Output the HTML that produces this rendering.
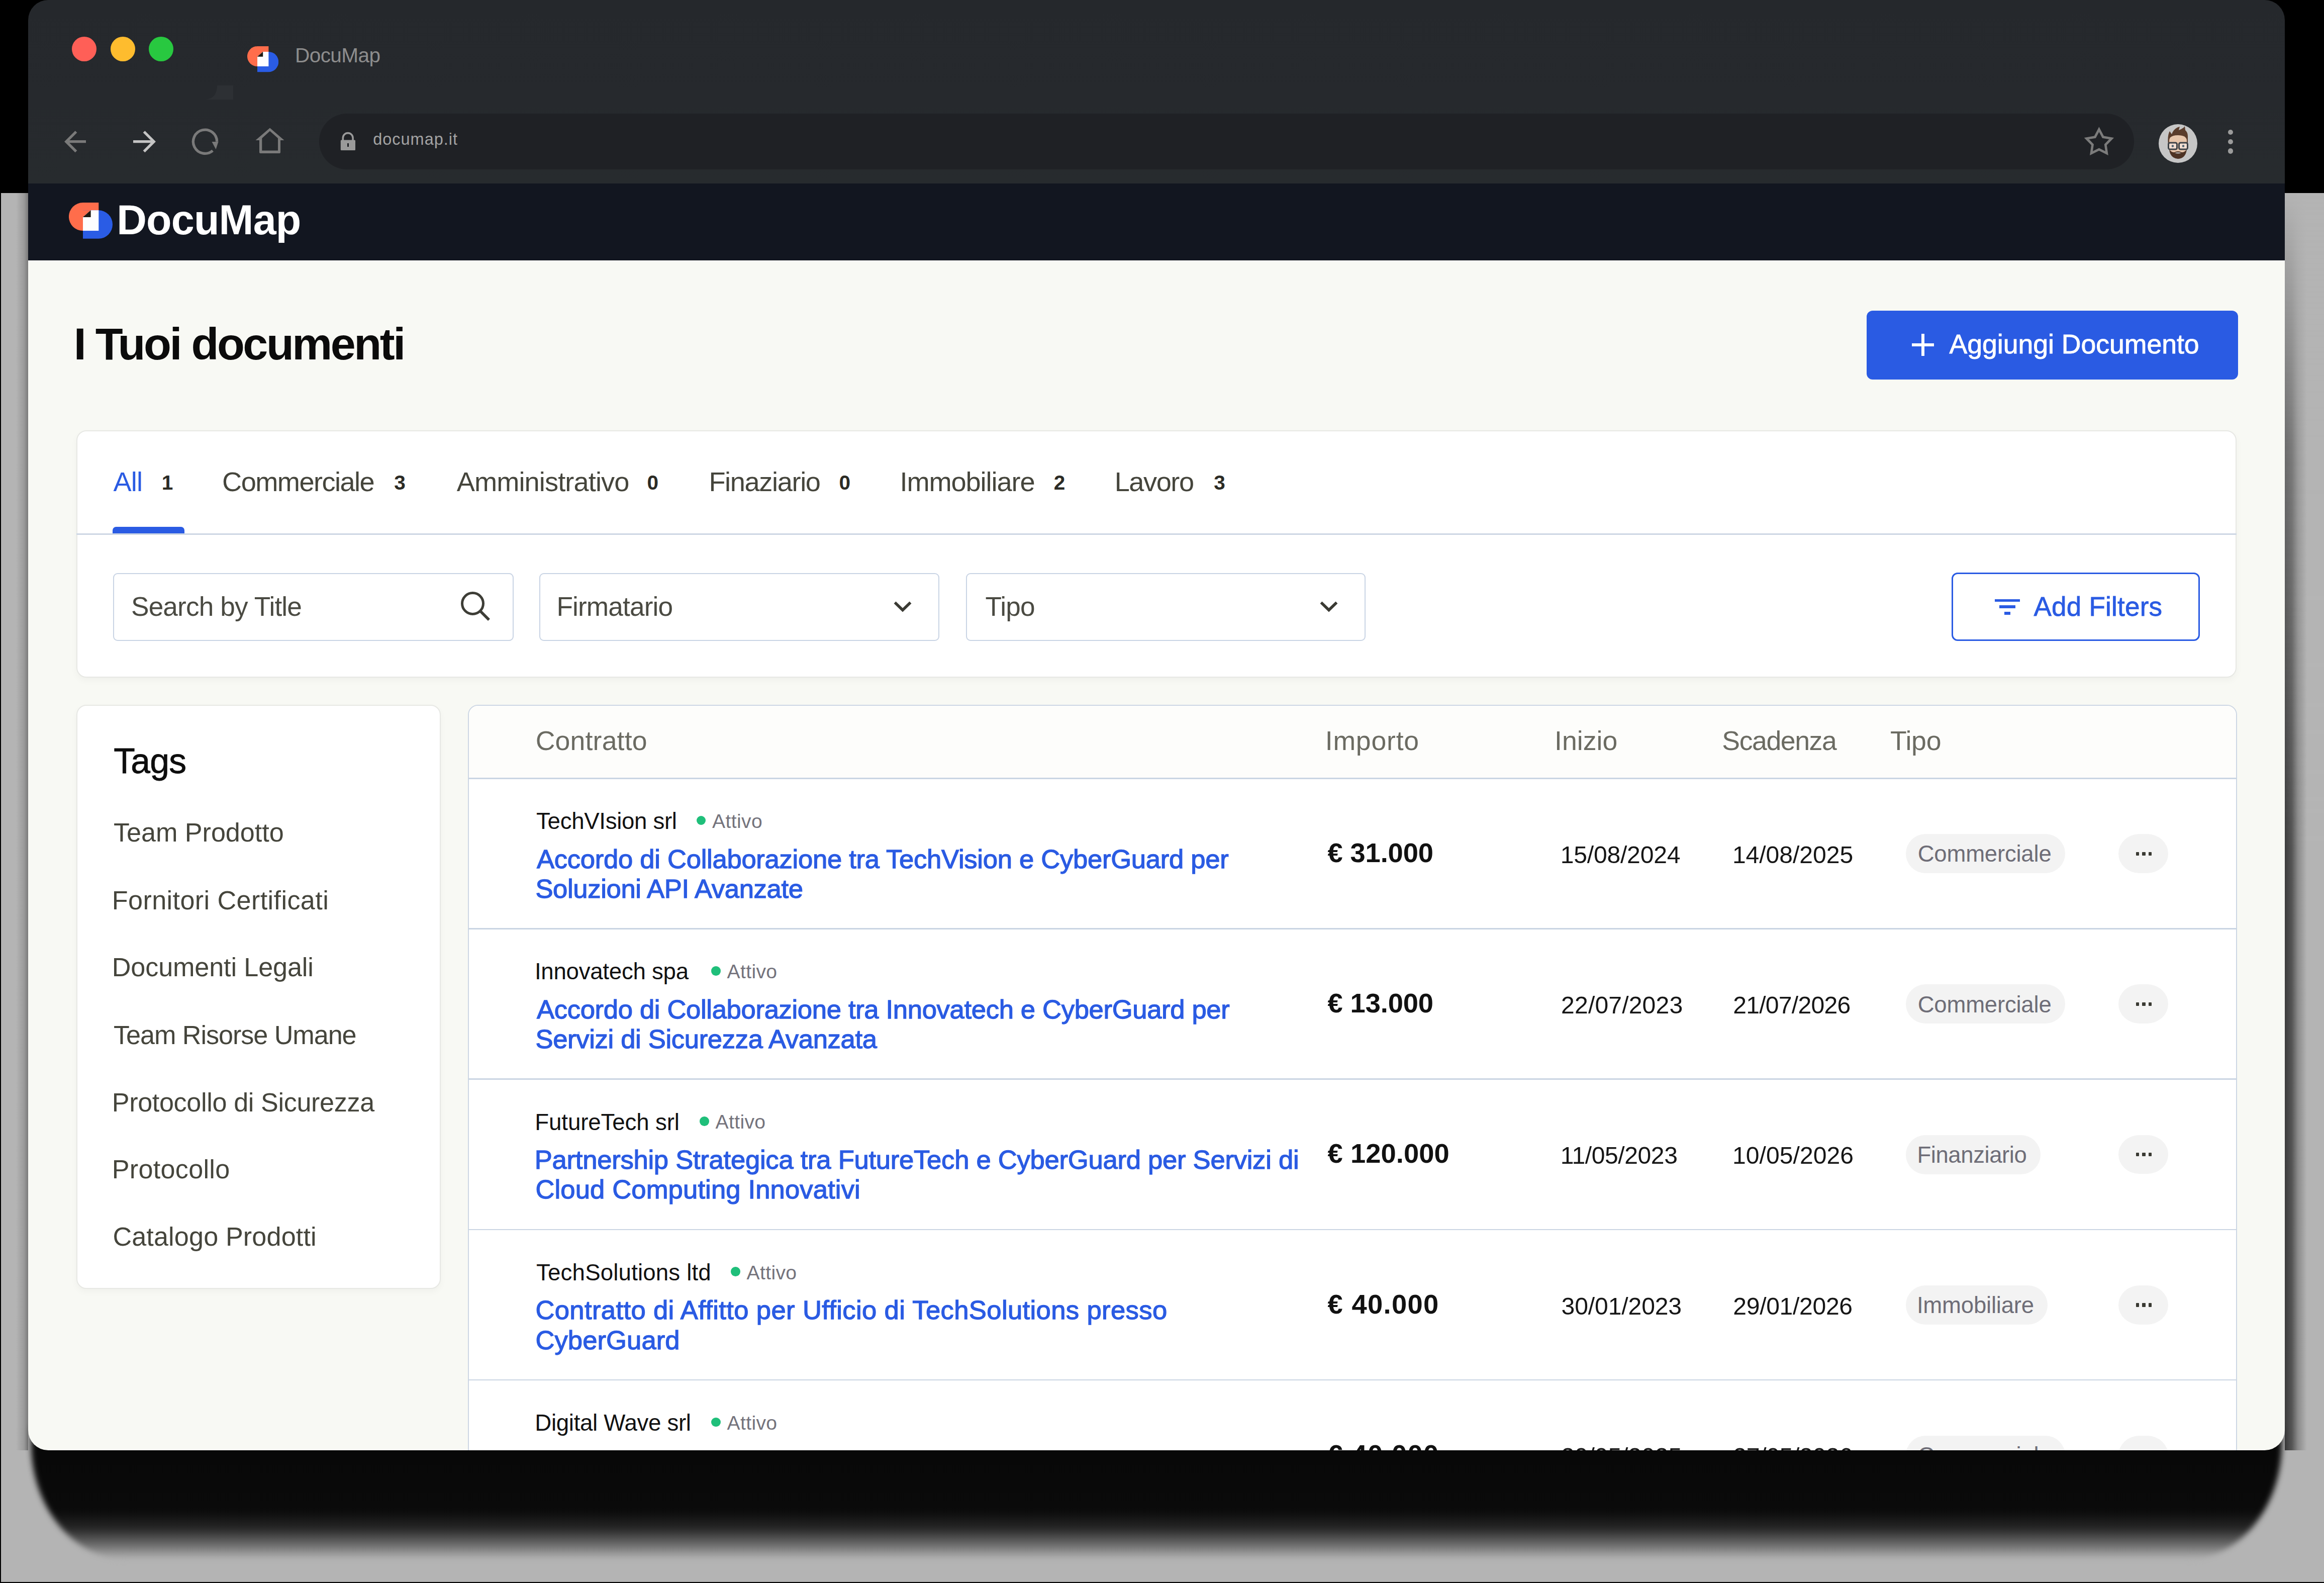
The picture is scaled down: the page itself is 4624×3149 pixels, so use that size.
<!DOCTYPE html>
<html><head><meta charset="utf-8"><style>
html,body{margin:0;padding:0;}
body{width:4624px;height:3149px;position:relative;overflow:hidden;background:#b4b4b4;font-family:"Liberation Sans",sans-serif;}
div{white-space:nowrap;}
</style></head><body>
<div style="position:absolute;left:0px;top:0px;width:4624px;height:384px;background:#000"></div>
<div style="position:absolute;left:0px;top:384px;width:56px;height:2501px;background:linear-gradient(to left,#7a7a7a 0,#9a9a9a 8px,#b4b4b4 24px)"></div>
<div style="position:absolute;left:4546px;top:384px;width:78px;height:2501px;background:#b4b4b4"></div>
<div style="position:absolute;left:4546px;top:384px;width:78px;height:2501px;background:linear-gradient(to right,#3c3c3c 0,#555 14px,#8a8a8a 26px,#b4b4b4 44px);-webkit-mask-image:linear-gradient(to bottom,transparent 0,rgba(0,0,0,.6) 500px,#000 1300px)"></div>
<div style="position:absolute;left:62px;top:2840px;width:4478px;height:262px;background:linear-gradient(to bottom,#070707 0,#0a0a0a 165px,#262626 200px,#6a6a6a 232px,#b4b4b4 262px);border-radius:0 0 190px 190px/0 0 230px 230px;filter:blur(6px)"></div>
<div style="position:absolute;left:0px;top:3147px;width:4624px;height:2px;background:#000"></div>
<div style="position:absolute;left:0px;top:384px;width:2px;height:2765px;background:#000"></div>
<div style="position:absolute;left:0;top:0;width:4624px;height:3149px;clip-path:inset(0px 78px 264px 56px round 40px);">
<div style="position:absolute;left:56px;top:0px;width:4490px;height:365px;background:linear-gradient(to bottom,#25282c 0,#26292d 200px,#272b2e 365px)"></div>
<div style="position:absolute;left:142.8px;top:73.1px;width:49px;height:49px;background:#ff5f57;border-radius:50%"></div>
<div style="position:absolute;left:219.7px;top:73.1px;width:49px;height:49px;background:#febc2e;border-radius:50%"></div>
<div style="position:absolute;left:296.1px;top:73.1px;width:49px;height:49px;background:#28c840;border-radius:50%"></div>
<svg style="position:absolute;left:0;top:0" width="600" height="220"><path d="M464 170 L432 170 Q432 198 405 198 L464 198 Z" fill="#2d3034"/></svg>
<svg style="position:absolute;left:491.6px;top:92px" width="62.2" height="51.5" viewBox="0 0 87 72"><path d="M59.3 0 H28 A28 28 0 0 0 28 56.1 H59.3 Z" fill="#ff6d4b"/><path d="M28 15.3 H59 A28 28.25 0 0 1 59 71.8 H28 Z" fill="#2a5ce5"/><path d="M43.6 15.3 H59.3 V56.1 H28 V29 Z" fill="#fdfdff"/><path d="M28 15.3 H43.6 L28 29 Z" fill="#ff6d4b"/><path d="M43.6 15.3 V29 H28 Z" fill="#1e1a12"/></svg>
<div style="position:absolute;left:587.0px;top:89.5px;font-size:40.58px;line-height:40.58px;font-weight:400;letter-spacing:-0.60px;color:#8d8d8d;">DocuMap</div>
<svg style="position:absolute;left:0;top:0" width="700" height="365"><g fill="none" stroke="#7a7a7a" stroke-width="5.3" stroke-linecap="butt"><path d="M171 281.7 H133 M151.5 262 L131.8 281.7 L151.5 301.4"/><path d="M265 281.7 H303 M286.5 262 L306.2 281.7 L286.5 301.4" stroke="#c4c4c4"/><path d="M423.2 299.8 A23.6 23.6 0 1 1 431.6 281.7"/></g><path d="M421.5 282 L434.5 282 L429.5 297 Z" fill="#7a7a7a"/><path fill-rule="evenodd" fill="#7a7a7a" d="M537 254.5 L565.5 279 H558 V303 Q558 305 556 305 H518 Q516 305 516 303 V279 H508.5 Z M537 260.8 L553 275 V299.6 H521.3 V275 Z"/></svg>
<div style="position:absolute;left:635px;top:226px;width:3611px;height:111px;background:#1f2125;border-radius:56px"></div>
<svg style="position:absolute;left:670px;top:258px" width="45" height="50"><path d="M12.3 21 V16.5 A9.9 9.9 0 0 1 32.1 16.5 V21" fill="none" stroke="#9a9a9a" stroke-width="3.6"/><rect x="7.8" y="20.6" width="29.2" height="20.4" rx="1.5" fill="#9a9a9a"/><rect x="21" y="27" width="3" height="7" fill="#1f2125"/></svg>
<div style="position:absolute;left:742.2px;top:260.7px;font-size:32.46px;line-height:32.46px;font-weight:400;letter-spacing:1.01px;color:#a3a3a3;">documap.it</div>
<svg style="position:absolute;left:0;top:0;width:4624px;height:365px" width="4624" height="365"><path d="M4176.4 257.4 L4184.4 272.6 L4201.3 275.5 L4189.3 287.8 L4191.8 304.8 L4176.4 297.2 L4161.0 304.8 L4163.5 287.8 L4151.5 275.5 L4168.4 272.6 Z" fill="none" stroke="#7b7b7b" stroke-width="4.7" stroke-linejoin="miter"/></svg>
<svg style="position:absolute;left:4294.8px;top:246.8px" width="77" height="77" viewBox="0 0 77 77"><circle cx="38.5" cy="38.5" r="38.5" fill="#c6c6c6"/><path d="M19 42 Q17 22 22 14 L26 20 Q30 8 42 5 L40 12 Q50 8 52 4 L53 12 Q58 16 58 24 L58 42 Z" fill="#5b3d2c"/><path d="M21 32 Q22 22 38.5 22 Q55 22 56 32 L56 48 Q55 62 38.5 63 Q22 62 21 48 Z" fill="#e8c6ab"/><path d="M21 50 Q23 68 38.5 69 Q54 68 56 50 Q52 56 46 56 Q38.5 52 31 56 Q25 56 21 50 Z" fill="#4e3324"/><path d="M32 57 Q38.5 55 45 57 Q38.5 60 32 57 Z" fill="#b8b8b8"/><rect x="19.5" y="37" width="17" height="13" rx="3" fill="#f1ddd0" stroke="#3d4247" stroke-width="3"/><rect x="40.5" y="37" width="17" height="13" rx="3" fill="#f1ddd0" stroke="#3d4247" stroke-width="3"/><circle cx="28" cy="43.5" r="2.2" fill="#4b6070"/><circle cx="49" cy="43.5" r="2.2" fill="#4b6070"/></svg>
<div style="position:absolute;left:4432.5px;top:257.7px;width:10.6px;height:10.6px;background:#9b9b9b;border-radius:50%"></div>
<div style="position:absolute;left:4432.5px;top:276.7px;width:10.6px;height:10.6px;background:#9b9b9b;border-radius:50%"></div>
<div style="position:absolute;left:4432.5px;top:295.2px;width:10.6px;height:10.6px;background:#9b9b9b;border-radius:50%"></div>
<div style="position:absolute;left:56px;top:365px;width:4490px;height:153px;background:#121620"></div>
<svg style="position:absolute;left:137px;top:402.7px" width="87.0" height="72.0" viewBox="0 0 87 72"><path d="M59.3 0 H28 A28 28 0 0 0 28 56.1 H59.3 Z" fill="#ff6d4b"/><path d="M28 15.3 H59 A28 28.25 0 0 1 59 71.8 H28 Z" fill="#2a5ce5"/><path d="M43.6 15.3 H59.3 V56.1 H28 V29 Z" fill="#fdfdff"/><path d="M28 15.3 H43.6 L28 29 Z" fill="#ff6d4b"/><path d="M43.6 15.3 V29 H28 Z" fill="#1e1a12"/></svg>
<div style="position:absolute;left:232.2px;top:396.8px;font-size:82.61px;line-height:82.61px;font-weight:700;letter-spacing:-0.78px;color:#ffffff;">DocuMap</div>
<div style="position:absolute;left:56px;top:518px;width:4490px;height:2367px;background:#f8f9f4"></div>
<div style="position:absolute;left:146.7px;top:639.6px;font-size:89.86px;line-height:89.86px;font-weight:700;letter-spacing:-3.44px;color:#0b0b0b;">I Tuoi documenti</div>
<div style="position:absolute;left:3714px;top:618px;width:738.5px;height:137px;background:#2a5be3;border-radius:12px"></div>
<div style="position:absolute;left:3804px;top:683px;width:43.5px;height:6px;background:#fff"></div>
<div style="position:absolute;left:3822.8px;top:664.4px;width:6px;height:43.6px;background:#fff"></div>
<div style="position:absolute;left:3878.5px;top:658.4px;font-size:53.62px;line-height:53.62px;font-weight:400;letter-spacing:-0.03px;color:#ffffff;-webkit-text-stroke:0.9px #fff;">Aggiungi Documento</div>
<div style="position:absolute;left:152px;top:856px;width:4298px;height:492px;background:#fff;border:2px solid #e7e8e4;border-radius:20px;box-sizing:border-box;box-shadow:0 6px 14px rgba(0,0,0,0.035)"></div>
<div style="position:absolute;left:225.5px;top:930.5px;font-size:54.20px;line-height:54.20px;font-weight:400;letter-spacing:-0.86px;color:#2a5be3;">All</div>
<div style="position:absolute;left:442.1px;top:930.5px;font-size:54.20px;line-height:54.20px;font-weight:400;letter-spacing:-1.56px;color:#45453c;">Commerciale</div>
<div style="position:absolute;left:908.7px;top:930.5px;font-size:54.20px;line-height:54.20px;font-weight:400;letter-spacing:-0.89px;color:#45453c;">Amministrativo</div>
<div style="position:absolute;left:1410.4px;top:930.5px;font-size:54.20px;line-height:54.20px;font-weight:400;letter-spacing:-1.37px;color:#45453c;">Finaziario</div>
<div style="position:absolute;left:1790.5px;top:930.5px;font-size:54.20px;line-height:54.20px;font-weight:400;letter-spacing:-1.10px;color:#45453c;">Immobiliare</div>
<div style="position:absolute;left:2217.7px;top:930.5px;font-size:54.20px;line-height:54.20px;font-weight:400;letter-spacing:-1.47px;color:#45453c;">Lavoro</div>
<div style="position:absolute;left:321.8px;top:940.2px;font-size:40.58px;line-height:40.58px;font-weight:700;letter-spacing:0.00px;color:#2b2b25;">1</div>
<div style="position:absolute;left:784.2px;top:940.2px;font-size:40.58px;line-height:40.58px;font-weight:700;letter-spacing:0.00px;color:#2b2b25;">3</div>
<div style="position:absolute;left:1287.4px;top:940.2px;font-size:40.58px;line-height:40.58px;font-weight:700;letter-spacing:0.00px;color:#2b2b25;">0</div>
<div style="position:absolute;left:1669.4px;top:940.2px;font-size:40.58px;line-height:40.58px;font-weight:700;letter-spacing:0.00px;color:#2b2b25;">0</div>
<div style="position:absolute;left:2096.8px;top:940.2px;font-size:40.58px;line-height:40.58px;font-weight:700;letter-spacing:0.00px;color:#2b2b25;">2</div>
<div style="position:absolute;left:2415.2px;top:940.2px;font-size:40.58px;line-height:40.58px;font-weight:700;letter-spacing:0.00px;color:#2b2b25;">3</div>
<div style="position:absolute;left:224px;top:1048px;width:143px;height:13px;background:#2a5be3;border-radius:7px 7px 0 0"></div>
<div style="position:absolute;left:152px;top:1061px;width:4298px;height:2.5px;background:#cdd7e4"></div>
<div style="position:absolute;left:225px;top:1140px;width:797px;height:135px;background:#fff;border:2px solid #c9d4e4;border-radius:9px;box-sizing:border-box"></div>
<div style="position:absolute;left:1073px;top:1140px;width:796px;height:135px;background:#fff;border:2px solid #c9d4e4;border-radius:9px;box-sizing:border-box"></div>
<div style="position:absolute;left:1922px;top:1140px;width:795px;height:135px;background:#fff;border:2px solid #c9d4e4;border-radius:9px;box-sizing:border-box"></div>
<div style="position:absolute;left:261.0px;top:1179.5px;font-size:53.19px;line-height:53.19px;font-weight:400;letter-spacing:-0.85px;color:#4a4a42;">Search by Title</div>
<div style="position:absolute;left:1107.4px;top:1179.5px;font-size:53.19px;line-height:53.19px;font-weight:400;letter-spacing:-0.85px;color:#4a4a42;">Firmatario</div>
<div style="position:absolute;left:1960.4px;top:1179.5px;font-size:53.19px;line-height:53.19px;font-weight:400;letter-spacing:-0.73px;color:#4a4a42;">Tipo</div>
<svg style="position:absolute;left:900px;top:1160px" width="90" height="90"><circle cx="40.5" cy="40.5" r="21" fill="none" stroke="#3d3d36" stroke-width="5"/><path d="M56 56 L73 73" stroke="#3d3d36" stroke-width="5.5" stroke-linecap="butt"/></svg>
<svg style="position:absolute;left:1770.5px;top:1180px" width="50" height="50"><path d="M9.5 18.5 L25 33.5 L40.5 18.5" fill="none" stroke="#3a3a33" stroke-width="5.6"/></svg>
<svg style="position:absolute;left:2618.5px;top:1180px" width="50" height="50"><path d="M9.5 18.5 L25 33.5 L40.5 18.5" fill="none" stroke="#3a3a33" stroke-width="5.6"/></svg>
<div style="position:absolute;left:3882.6px;top:1139px;width:494.4px;height:136px;border:3px solid #2a5be3;border-radius:12px;box-sizing:border-box"></div>
<div style="position:absolute;left:3968.7px;top:1191.6px;width:50.2px;height:5.6px;background:#2a5be3"></div>
<div style="position:absolute;left:3978px;top:1204.3px;width:31.6px;height:5.7px;background:#2a5be3"></div>
<div style="position:absolute;left:3988px;top:1217px;width:12.3px;height:5.9px;background:#2a5be3"></div>
<div style="position:absolute;left:4046.5px;top:1179.5px;font-size:53.04px;line-height:53.04px;font-weight:400;letter-spacing:0.21px;color:#2a5be3;-webkit-text-stroke:0.8px #2a5be3;">Add Filters</div>
<div style="position:absolute;left:152px;top:1402px;width:724.6px;height:1162px;background:#fff;border:2px solid #e7e8e4;border-radius:20px;box-sizing:border-box;box-shadow:0 6px 14px rgba(0,0,0,0.035)"></div>
<div style="position:absolute;left:226.3px;top:1479.5px;font-size:69.57px;line-height:69.57px;font-weight:400;letter-spacing:-0.77px;color:#0d0d0d;-webkit-text-stroke:0.8px #0d0d0d;">Tags</div>
<div style="position:absolute;left:226.0px;top:1630.2px;font-size:52.17px;line-height:52.17px;font-weight:400;letter-spacing:-0.04px;color:#45453c;">Team Prodotto</div>
<div style="position:absolute;left:222.8px;top:1764.5px;font-size:52.17px;line-height:52.17px;font-weight:400;letter-spacing:0.39px;color:#45453c;">Fornitori Certificati</div>
<div style="position:absolute;left:222.8px;top:1898.4px;font-size:52.17px;line-height:52.17px;font-weight:400;letter-spacing:-0.13px;color:#45453c;">Documenti Legali</div>
<div style="position:absolute;left:226.0px;top:2032.7px;font-size:52.17px;line-height:52.17px;font-weight:400;letter-spacing:-1.05px;color:#45453c;">Team Risorse Umane</div>
<div style="position:absolute;left:222.8px;top:2167.2px;font-size:52.17px;line-height:52.17px;font-weight:400;letter-spacing:-0.37px;color:#45453c;">Protocollo di Sicurezza</div>
<div style="position:absolute;left:222.8px;top:2300.3px;font-size:52.17px;line-height:52.17px;font-weight:400;letter-spacing:0.27px;color:#45453c;">Protocollo</div>
<div style="position:absolute;left:224.4px;top:2434.2px;font-size:52.17px;line-height:52.17px;font-weight:400;letter-spacing:0.14px;color:#45453c;">Catalogo Prodotti</div>
<div style="position:absolute;left:931px;top:1402px;width:3519.7px;height:1700px;background:#fff;border:2px solid #cdd7e4;border-radius:20px;box-sizing:border-box"></div>
<div style="position:absolute;left:933px;top:1404px;width:3515.7px;height:143px;background:#fdfdfb;border-radius:18px 18px 0 0"></div>
<div style="position:absolute;left:931px;top:1547px;width:3519.7px;height:2.5px;background:#cad5e3"></div>
<div style="position:absolute;left:1065.7px;top:1447.4px;font-size:53.62px;line-height:53.62px;font-weight:400;letter-spacing:0.17px;color:#6b6b62;">Contratto</div>
<div style="position:absolute;left:2636.8px;top:1447.4px;font-size:53.62px;line-height:53.62px;font-weight:400;letter-spacing:0.76px;color:#6b6b62;">Importo</div>
<div style="position:absolute;left:3093.0px;top:1447.4px;font-size:53.62px;line-height:53.62px;font-weight:400;letter-spacing:0.05px;color:#6b6b62;">Inizio</div>
<div style="position:absolute;left:3426.3px;top:1447.4px;font-size:53.62px;line-height:53.62px;font-weight:400;letter-spacing:-1.42px;color:#6b6b62;">Scadenza</div>
<div style="position:absolute;left:3760.9px;top:1447.4px;font-size:53.62px;line-height:53.62px;font-weight:400;letter-spacing:-0.23px;color:#6b6b62;">Tipo</div>
<div style="position:absolute;left:931px;top:1846.0px;width:3519.7px;height:2.5px;background:#cad5e3"></div>
<div style="position:absolute;left:1067.1px;top:1611.2px;font-size:45.65px;line-height:45.65px;font-weight:400;letter-spacing:-0.33px;color:#111111;">TechVIsion srl</div>
<div style="position:absolute;left:1385.6px;top:1622.7px;width:18.6px;height:18.6px;background:#1fbf7a;border-radius:50%"></div>
<div style="position:absolute;left:1417.1px;top:1613.9px;font-size:39.13px;line-height:39.13px;font-weight:400;letter-spacing:0.35px;color:#74737c;">Attivo</div>
<div style="position:absolute;left:1068.0px;top:1682.6px;font-size:52.61px;line-height:52.61px;font-weight:400;letter-spacing:-0.29px;color:#2a5be3;-webkit-text-stroke:1.3px #2a5be3;">Accordo di Collaborazione tra TechVision e CyberGuard per</div>
<div style="position:absolute;left:1065.4px;top:1741.9px;font-size:52.61px;line-height:52.61px;font-weight:400;letter-spacing:-0.36px;color:#2a5be3;-webkit-text-stroke:1.3px #2a5be3;">Soluzioni API Avanzate</div>
<div style="position:absolute;left:2641.5px;top:1669.8px;font-size:54.35px;line-height:54.35px;font-weight:700;letter-spacing:-0.16px;color:#111111;">€ 31.000</div>
<div style="position:absolute;left:3104.7px;top:1675.8px;font-size:48.12px;line-height:48.12px;font-weight:400;letter-spacing:-0.22px;color:#161616;">15/08/2024</div>
<div style="position:absolute;left:3446.9px;top:1675.8px;font-size:48.12px;line-height:48.12px;font-weight:400;letter-spacing:-0.06px;color:#161616;">14/08/2025</div>
<div style="position:absolute;left:3791.6px;top:1659.0px;width:317.7999999999997px;height:78px;background:#f3f3f3;border-radius:39px"></div>
<div style="position:absolute;left:3815.7px;top:1676.3px;font-size:45.51px;line-height:45.51px;font-weight:400;letter-spacing:-0.20px;color:#6e6d77;">Commerciale</div>
<div style="position:absolute;left:4215.2px;top:1659.2px;width:99.1px;height:77.7px;background:#f3f3f3;border-radius:42px/39px"></div>
<div style="position:absolute;left:4249.8px;top:1694.6px;width:6.3px;height:7.4px;background:#3a3a33;border-radius:1px"></div>
<div style="position:absolute;left:4262.35px;top:1694.6px;width:6.3px;height:7.4px;background:#3a3a33;border-radius:1px"></div>
<div style="position:absolute;left:4274.900000000001px;top:1694.6px;width:6.3px;height:7.4px;background:#3a3a33;border-radius:1px"></div>
<div style="position:absolute;left:931px;top:2145.25px;width:3519.7px;height:2.5px;background:#cad5e3"></div>
<div style="position:absolute;left:1063.9px;top:1910.4px;font-size:45.65px;line-height:45.65px;font-weight:400;letter-spacing:-0.26px;color:#111111;">Innovatech spa</div>
<div style="position:absolute;left:1415px;top:1921.95px;width:18.6px;height:18.6px;background:#1fbf7a;border-radius:50%"></div>
<div style="position:absolute;left:1446.5px;top:1913.2px;font-size:39.13px;line-height:39.13px;font-weight:400;letter-spacing:0.35px;color:#74737c;">Attivo</div>
<div style="position:absolute;left:1068.0px;top:1981.8px;font-size:52.61px;line-height:52.61px;font-weight:400;letter-spacing:-0.34px;color:#2a5be3;-webkit-text-stroke:1.3px #2a5be3;">Accordo di Collaborazione tra Innovatech e CyberGuard per</div>
<div style="position:absolute;left:1065.4px;top:2041.1px;font-size:52.61px;line-height:52.61px;font-weight:400;letter-spacing:-0.34px;color:#2a5be3;-webkit-text-stroke:1.3px #2a5be3;">Servizi di Sicurezza Avanzata</div>
<div style="position:absolute;left:2641.5px;top:1969.1px;font-size:54.35px;line-height:54.35px;font-weight:700;letter-spacing:-0.14px;color:#111111;">€ 13.000</div>
<div style="position:absolute;left:3106.1px;top:1975.1px;font-size:48.12px;line-height:48.12px;font-weight:400;letter-spacing:0.14px;color:#161616;">22/07/2023</div>
<div style="position:absolute;left:3448.3px;top:1975.1px;font-size:48.12px;line-height:48.12px;font-weight:400;letter-spacing:-0.77px;color:#161616;">21/07/2026</div>
<div style="position:absolute;left:3791.6px;top:1958.25px;width:317.7999999999997px;height:78px;background:#f3f3f3;border-radius:39px"></div>
<div style="position:absolute;left:3815.7px;top:1975.6px;font-size:45.51px;line-height:45.51px;font-weight:400;letter-spacing:-0.20px;color:#6e6d77;">Commerciale</div>
<div style="position:absolute;left:4215.2px;top:1958.45px;width:99.1px;height:77.7px;background:#f3f3f3;border-radius:42px/39px"></div>
<div style="position:absolute;left:4249.8px;top:1993.85px;width:6.3px;height:7.4px;background:#3a3a33;border-radius:1px"></div>
<div style="position:absolute;left:4262.35px;top:1993.85px;width:6.3px;height:7.4px;background:#3a3a33;border-radius:1px"></div>
<div style="position:absolute;left:4274.900000000001px;top:1993.85px;width:6.3px;height:7.4px;background:#3a3a33;border-radius:1px"></div>
<div style="position:absolute;left:931px;top:2444.5px;width:3519.7px;height:2.5px;background:#cad5e3"></div>
<div style="position:absolute;left:1064.3px;top:2209.7px;font-size:45.65px;line-height:45.65px;font-weight:400;letter-spacing:-0.12px;color:#111111;">FutureTech srl</div>
<div style="position:absolute;left:1392px;top:2221.2px;width:18.6px;height:18.6px;background:#1fbf7a;border-radius:50%"></div>
<div style="position:absolute;left:1423.5px;top:2212.4px;font-size:39.13px;line-height:39.13px;font-weight:400;letter-spacing:0.35px;color:#74737c;">Attivo</div>
<div style="position:absolute;left:1063.8px;top:2281.1px;font-size:52.61px;line-height:52.61px;font-weight:400;letter-spacing:-0.27px;color:#2a5be3;-webkit-text-stroke:1.3px #2a5be3;">Partnership Strategica tra FutureTech e CyberGuard per Servizi di</div>
<div style="position:absolute;left:1065.4px;top:2340.4px;font-size:52.61px;line-height:52.61px;font-weight:400;letter-spacing:0.12px;color:#2a5be3;-webkit-text-stroke:1.3px #2a5be3;">Cloud Computing Innovativi</div>
<div style="position:absolute;left:2641.5px;top:2268.3px;font-size:54.35px;line-height:54.35px;font-weight:700;letter-spacing:0.07px;color:#111111;">€ 120.000</div>
<div style="position:absolute;left:3104.7px;top:2274.3px;font-size:48.12px;line-height:48.12px;font-weight:400;letter-spacing:-0.44px;color:#161616;">11/05/2023</div>
<div style="position:absolute;left:3446.9px;top:2274.3px;font-size:48.12px;line-height:48.12px;font-weight:400;letter-spacing:0.05px;color:#161616;">10/05/2026</div>
<div style="position:absolute;left:3791.6px;top:2257.5px;width:268.9000000000001px;height:78px;background:#f3f3f3;border-radius:39px"></div>
<div style="position:absolute;left:3814.4px;top:2274.8px;font-size:45.51px;line-height:45.51px;font-weight:400;letter-spacing:-0.41px;color:#6e6d77;">Finanziario</div>
<div style="position:absolute;left:4215.2px;top:2257.7px;width:99.1px;height:77.7px;background:#f3f3f3;border-radius:42px/39px"></div>
<div style="position:absolute;left:4249.8px;top:2293.1px;width:6.3px;height:7.4px;background:#3a3a33;border-radius:1px"></div>
<div style="position:absolute;left:4262.35px;top:2293.1px;width:6.3px;height:7.4px;background:#3a3a33;border-radius:1px"></div>
<div style="position:absolute;left:4274.900000000001px;top:2293.1px;width:6.3px;height:7.4px;background:#3a3a33;border-radius:1px"></div>
<div style="position:absolute;left:931px;top:2743.75px;width:3519.7px;height:2.5px;background:#cad5e3"></div>
<div style="position:absolute;left:1067.1px;top:2508.9px;font-size:45.65px;line-height:45.65px;font-weight:400;letter-spacing:0.16px;color:#111111;">TechSolutions ltd</div>
<div style="position:absolute;left:1454px;top:2520.45px;width:18.6px;height:18.6px;background:#1fbf7a;border-radius:50%"></div>
<div style="position:absolute;left:1485.5px;top:2511.7px;font-size:39.13px;line-height:39.13px;font-weight:400;letter-spacing:0.35px;color:#74737c;">Attivo</div>
<div style="position:absolute;left:1065.4px;top:2580.3px;font-size:52.61px;line-height:52.61px;font-weight:400;letter-spacing:0.36px;color:#2a5be3;-webkit-text-stroke:1.3px #2a5be3;">Contratto di Affitto per Ufficio di TechSolutions presso</div>
<div style="position:absolute;left:1065.4px;top:2639.6px;font-size:52.61px;line-height:52.61px;font-weight:400;letter-spacing:0.07px;color:#2a5be3;-webkit-text-stroke:1.3px #2a5be3;">CyberGuard</div>
<div style="position:absolute;left:2641.5px;top:2567.6px;font-size:54.35px;line-height:54.35px;font-weight:700;letter-spacing:1.33px;color:#111111;">€ 40.000</div>
<div style="position:absolute;left:3106.6px;top:2573.6px;font-size:48.12px;line-height:48.12px;font-weight:400;letter-spacing:-0.14px;color:#161616;">30/01/2023</div>
<div style="position:absolute;left:3448.3px;top:2573.6px;font-size:48.12px;line-height:48.12px;font-weight:400;letter-spacing:-0.33px;color:#161616;">29/01/2026</div>
<div style="position:absolute;left:3791.6px;top:2556.75px;width:282.9000000000001px;height:78px;background:#f3f3f3;border-radius:39px"></div>
<div style="position:absolute;left:3813.9px;top:2574.1px;font-size:45.51px;line-height:45.51px;font-weight:400;letter-spacing:-0.19px;color:#6e6d77;">Immobiliare</div>
<div style="position:absolute;left:4215.2px;top:2556.95px;width:99.1px;height:77.7px;background:#f3f3f3;border-radius:42px/39px"></div>
<div style="position:absolute;left:4249.8px;top:2592.35px;width:6.3px;height:7.4px;background:#3a3a33;border-radius:1px"></div>
<div style="position:absolute;left:4262.35px;top:2592.35px;width:6.3px;height:7.4px;background:#3a3a33;border-radius:1px"></div>
<div style="position:absolute;left:4274.900000000001px;top:2592.35px;width:6.3px;height:7.4px;background:#3a3a33;border-radius:1px"></div>
<div style="position:absolute;left:1064.3px;top:2808.2px;font-size:45.65px;line-height:45.65px;font-weight:400;letter-spacing:-0.31px;color:#111111;">Digital Wave srl</div>
<div style="position:absolute;left:1415px;top:2819.7px;width:18.6px;height:18.6px;background:#1fbf7a;border-radius:50%"></div>
<div style="position:absolute;left:1446.5px;top:2810.9px;font-size:39.13px;line-height:39.13px;font-weight:400;letter-spacing:0.35px;color:#74737c;">Attivo</div>
<div style="position:absolute;left:1068.0px;top:2879.6px;font-size:52.61px;line-height:52.61px;font-weight:400;letter-spacing:-1.70px;color:#2a5be3;-webkit-text-stroke:1.3px #2a5be3;">Accordo di Fornitura Servizi Digitali tra Digital Wave e CyberGuard</div>
<div style="position:absolute;left:1064.8px;top:2938.9px;font-size:52.61px;line-height:52.61px;font-weight:400;letter-spacing:2.58px;color:#2a5be3;-webkit-text-stroke:1.3px #2a5be3;">per Marketing Online</div>
<div style="position:absolute;left:2641.5px;top:2866.8px;font-size:54.35px;line-height:54.35px;font-weight:700;letter-spacing:1.33px;color:#111111;">€ 40.000</div>
<div style="position:absolute;left:3106.1px;top:2872.8px;font-size:48.12px;line-height:48.12px;font-weight:400;letter-spacing:-0.08px;color:#161616;">20/05/2025</div>
<div style="position:absolute;left:3448.3px;top:2872.8px;font-size:48.12px;line-height:48.12px;font-weight:400;letter-spacing:-0.33px;color:#161616;">27/05/2026</div>
<div style="position:absolute;left:3791.6px;top:2856.0px;width:317.7999999999997px;height:78px;background:#f3f3f3;border-radius:39px"></div>
<div style="position:absolute;left:3815.7px;top:2873.3px;font-size:45.51px;line-height:45.51px;font-weight:400;letter-spacing:-0.20px;color:#6e6d77;">Commerciale</div>
<div style="position:absolute;left:4215.2px;top:2856.2px;width:99.1px;height:77.7px;background:#f3f3f3;border-radius:42px/39px"></div>
<div style="position:absolute;left:4249.8px;top:2891.6px;width:6.3px;height:7.4px;background:#3a3a33;border-radius:1px"></div>
<div style="position:absolute;left:4262.35px;top:2891.6px;width:6.3px;height:7.4px;background:#3a3a33;border-radius:1px"></div>
<div style="position:absolute;left:4274.900000000001px;top:2891.6px;width:6.3px;height:7.4px;background:#3a3a33;border-radius:1px"></div>
</div>
</body></html>
